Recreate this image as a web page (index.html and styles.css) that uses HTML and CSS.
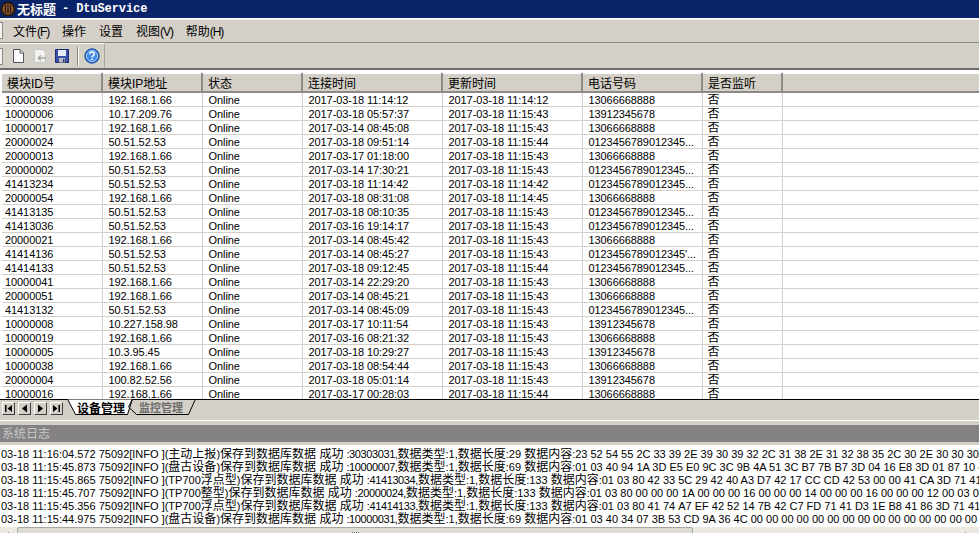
FILE: index.html
```html
<!DOCTYPE html>
<html lang="zh-CN">
<head>
<meta charset="utf-8">
<title>无标题 - DtuService</title>
<link rel="stylesheet" href="styles.css">
</head>
<body>
<div class="window">
  <header class="titlebar">
    <svg class="appicon" width="16" height="16" viewBox="0 0 16 16"><circle cx="8" cy="8" r="7.500" fill="#2a1a10"/><circle cx="8" cy="8" r="5.500" fill="#8a5a30"/><path d="M5.500 4v8M8 3.500v9M10.500 4v8" stroke="#2a1a10" stroke-width="1.200"/></svg>
    <span class="title-cjk">无标题</span><span class="title-app">- DtuService</span>
  </header>
  <nav class="menubar">
    <span class="grip"></span>
    <span class="menu">文件<span class="key">(F)</span></span><span class="menu">操作</span><span class="menu">设置</span><span class="menu">视图<span class="key">(V)</span></span><span class="menu">帮助<span class="key">(H)</span></span>
  </nav>
  <div class="toolbar">
    <div class="toolband">
      <span class="grip"></span>
      <svg class="tool" width="16" height="16" viewBox="0 0 16 16"><path d="M3.500 1.500h6.500l3.500 3.500v9.500H3.500z" fill="#fff" stroke="#555"/><path d="M10 1.500V5h3.500" fill="#dfe4ee" stroke="#555"/></svg>
      <svg class="tool" width="16" height="16" viewBox="0 0 16 16"><path d="M2.500 1.500h8l3 3v10h-11z" fill="#f2f2f0" stroke="#c8c8c4"/><path d="M6 10h8M6 10l3-2.500M6 10l3 2.500" fill="none" stroke="#a8a8a4" stroke-width="1.500"/></svg>
      <svg class="tool" width="16" height="16" viewBox="0 0 16 16"><path d="M1.500 1.500h13v13h-13z" fill="#3a4fa8" stroke="#1c2a70"/><path d="M4 2h8v6H4z" fill="#e8ecf4"/><path d="M5 10h6v4.500H5z" fill="#b8bcc8"/><path d="M9 11h1.500v3H9z" fill="#27336f"/></svg>
      <span class="sep"></span>
      <svg class="tool help" width="16" height="16" viewBox="0 0 16 16"><circle cx="8" cy="8" r="7.200" fill="#2a6fd0" stroke="#1a4ea0"/><circle cx="8" cy="8" r="5.500" fill="#3f8be6" stroke="#cfe2fa" stroke-width=".8"/><path d="M5.800 6.200c0-1.500 1-2.200 2.200-2.200s2.300.8 2.300 2c0 1.700-2.200 1.700-2.200 3.400" fill="none" stroke="#fff" stroke-width="1.500"/><path d="M7.300 10.600h1.500v1.500H7.300z" fill="#fff"/></svg>
    </div>
  </div>
  <main class="listpane">
    <table class="grid">
      <colgroup><col class="c1"><col class="c1"><col class="c1"><col class="c2"><col class="c2"><col class="c3"><col class="c4"><col></colgroup>
      <thead><tr><th>模块ID号</th><th>模块IP地址</th><th>状态</th><th>连接时间</th><th>更新时间</th><th>电话号码</th><th>是否监听</th><th></th></tr></thead>
      <tbody>
        <tr><td>10000039</td><td>192.168.1.66</td><td>Online</td><td>2017-03-18 11:14:12</td><td>2017-03-18 11:14:12</td><td>13066668888</td><td>否</td><td></td></tr>
        <tr><td>10000006</td><td>10.17.209.76</td><td>Online</td><td>2017-03-18 05:57:37</td><td>2017-03-18 11:15:43</td><td>13912345678</td><td>否</td><td></td></tr>
        <tr><td>10000017</td><td>192.168.1.66</td><td>Online</td><td>2017-03-14 08:45:08</td><td>2017-03-18 11:15:43</td><td>13066668888</td><td>否</td><td></td></tr>
        <tr><td>20000024</td><td>50.51.52.53</td><td>Online</td><td>2017-03-18 09:51:14</td><td>2017-03-18 11:15:44</td><td>0123456789012345...</td><td>否</td><td></td></tr>
        <tr><td>20000013</td><td>192.168.1.66</td><td>Online</td><td>2017-03-17 01:18:00</td><td>2017-03-18 11:15:43</td><td>13066668888</td><td>否</td><td></td></tr>
        <tr><td>20000002</td><td>50.51.52.53</td><td>Online</td><td>2017-03-14 17:30:21</td><td>2017-03-18 11:15:43</td><td>0123456789012345...</td><td>否</td><td></td></tr>
        <tr><td>41413234</td><td>50.51.52.53</td><td>Online</td><td>2017-03-18 11:14:42</td><td>2017-03-18 11:14:42</td><td>0123456789012345...</td><td>否</td><td></td></tr>
        <tr><td>20000054</td><td>192.168.1.66</td><td>Online</td><td>2017-03-18 08:31:08</td><td>2017-03-18 11:14:45</td><td>13066668888</td><td>否</td><td></td></tr>
        <tr><td>41413135</td><td>50.51.52.53</td><td>Online</td><td>2017-03-18 08:10:35</td><td>2017-03-18 11:15:43</td><td>0123456789012345...</td><td>否</td><td></td></tr>
        <tr><td>41413036</td><td>50.51.52.53</td><td>Online</td><td>2017-03-16 19:14:17</td><td>2017-03-18 11:15:43</td><td>0123456789012345...</td><td>否</td><td></td></tr>
        <tr><td>20000021</td><td>192.168.1.66</td><td>Online</td><td>2017-03-14 08:45:42</td><td>2017-03-18 11:15:43</td><td>13066668888</td><td>否</td><td></td></tr>
        <tr><td>41414136</td><td>50.51.52.53</td><td>Online</td><td>2017-03-14 08:45:27</td><td>2017-03-18 11:15:43</td><td>0123456789012345'...</td><td>否</td><td></td></tr>
        <tr><td>41414133</td><td>50.51.52.53</td><td>Online</td><td>2017-03-18 09:12:45</td><td>2017-03-18 11:15:44</td><td>0123456789012345...</td><td>否</td><td></td></tr>
        <tr><td>10000041</td><td>192.168.1.66</td><td>Online</td><td>2017-03-14 22:29:20</td><td>2017-03-18 11:15:43</td><td>13066668888</td><td>否</td><td></td></tr>
        <tr><td>20000051</td><td>192.168.1.66</td><td>Online</td><td>2017-03-14 08:45:21</td><td>2017-03-18 11:15:43</td><td>13066668888</td><td>否</td><td></td></tr>
        <tr><td>41413132</td><td>50.51.52.53</td><td>Online</td><td>2017-03-14 08:45:09</td><td>2017-03-18 11:15:43</td><td>0123456789012345...</td><td>否</td><td></td></tr>
        <tr><td>10000008</td><td>10.227.158.98</td><td>Online</td><td>2017-03-17 10:11:54</td><td>2017-03-18 11:15:43</td><td>13912345678</td><td>否</td><td></td></tr>
        <tr><td>10000019</td><td>192.168.1.66</td><td>Online</td><td>2017-03-16 08:21:32</td><td>2017-03-18 11:15:43</td><td>13066668888</td><td>否</td><td></td></tr>
        <tr><td>10000005</td><td>10.3.95.45</td><td>Online</td><td>2017-03-18 10:29:27</td><td>2017-03-18 11:15:43</td><td>13912345678</td><td>否</td><td></td></tr>
        <tr><td>10000038</td><td>192.168.1.66</td><td>Online</td><td>2017-03-18 08:54:44</td><td>2017-03-18 11:15:43</td><td>13066668888</td><td>否</td><td></td></tr>
        <tr><td>20000004</td><td>100.82.52.56</td><td>Online</td><td>2017-03-18 05:01:14</td><td>2017-03-18 11:15:43</td><td>13912345678</td><td>否</td><td></td></tr>
        <tr><td>10000016</td><td>192.168.1.66</td><td>Online</td><td>2017-03-17 00:28:03</td><td>2017-03-18 11:15:44</td><td>13066668888</td><td>否</td><td></td></tr>
      </tbody>
    </table>
  </main>
  <div class="tabbar">
    <div class="navbtns">
      <button class="nav"><svg width="9" height="9" viewBox="0 0 9 9"><path d="M1 1h1.500v7H1zM8 1v7L3.500 4.500z"/></svg></button>
      <button class="nav"><svg width="9" height="9" viewBox="0 0 9 9"><path d="M7 0.500v8L2 4.500z"/></svg></button>
      <button class="nav"><svg width="9" height="9" viewBox="0 0 9 9"><path d="M2 0.500v8l5-4z"/></svg></button>
      <button class="nav"><svg width="9" height="9" viewBox="0 0 9 9"><path d="M8 1H6.500v7H8zM1 1v7l4.500-3.500z"/></svg></button>
    </div>
    <div class="tabs">
      <svg class="tabshape" width="200" height="17" viewBox="0 0 200 17"><path d="M67.500 0 75.500 15.500H127.500L132.500 0z" fill="#fff" stroke="#000"/><path d="M132.500 0 128.500 8 136.500 15.500H188.500L195.500 0" fill="none" stroke="#000"/></svg>
      <span class="tab active">设备管理</span><span class="tab">监控管理</span>
    </div>
  </div>
  <div class="splitter"></div>
  <section class="logpane">
    <h2 class="logtitle">系统日志</h2>
    <div class="logframe">
      <div class="log">
        <div>03-18 11:16:04.572 75092[INFO ](<span class="zh">主动上报</span>)<span class="zh">保存到数据库数据 成功</span> <span class="id">:30303031,</span><span class="zh">数据类型</span>:1,<span class="zh">数据长度</span>:29 <span class="zh">数据内容</span>:23 52 54 55 2C 33 39 2E 39 30 39 32 2C 31 38 2E 31 32 38 35 2C 30 2E 30 30 30 30</div>
        <div>03-18 11:15:45.873 75092[INFO ](<span class="zh">盘古设备</span>)<span class="zh">保存到数据库数据 成功</span> <span class="id">:10000007,</span><span class="zh">数据类型</span>:1,<span class="zh">数据长度</span>:69 <span class="zh">数据内容</span>:01 03 40 94 1A 3D E5 E0 9C 3C 9B 4A 51 3C B7 7B B7 3D 04 16 E8 3D 01 87 10 43</div>
        <div>03-18 11:15:45.865 75092[INFO ](TP700<span class="zh">浮点型</span>)<span class="zh">保存到数据库数据 成功</span> <span class="id">:41413034,</span><span class="zh">数据类型</span>:1,<span class="zh">数据长度</span>:133 <span class="zh">数据内容</span>:01 03 80 42 33 5C 29 42 40 A3 D7 42 17 CC CD 42 53 00 00 41 CA 3D 71 41 E7</div>
        <div>03-18 11:15:45.707 75092[INFO ](TP700<span class="zh">整型</span>)<span class="zh">保存到数据库数据 成功</span> <span class="id">:20000024,</span><span class="zh">数据类型</span>:1,<span class="zh">数据长度</span>:133 <span class="zh">数据内容</span>:01 03 80 00 00 00 1A 00 00 00 16 00 00 00 14 00 00 00 16 00 00 00 12 00 03 0D</div>
        <div>03-18 11:15:45.356 75092[INFO ](TP700<span class="zh">浮点型</span>)<span class="zh">保存到数据库数据 成功</span> <span class="id">:41414133,</span><span class="zh">数据类型</span>:1,<span class="zh">数据长度</span>:133 <span class="zh">数据内容</span>:01 03 80 41 74 A7 EF 42 52 14 7B 42 C7 FD 71 41 D3 1E B8 41 86 3D 71 41 87</div>
        <div>03-18 11:15:44.975 75092[INFO ](<span class="zh">盘古设备</span>)<span class="zh">保存到数据库数据 成功</span> <span class="id">:10000031,</span><span class="zh">数据类型</span>:1,<span class="zh">数据长度</span>:69 <span class="zh">数据内容</span>:01 03 40 34 07 3B 53 CD 9A 36 4C 00 00 00 00 00 00 00 00 00 00 00 00 00 00 00 43 2</div>
      </div>
      <div class="hscroll">
        <span class="arrow left"></span>
        <div class="thumb"><span class="ridges"></span></div>
        <span class="arrow right"></span>
      </div>
    </div>
  </section>
</div>
</body>
</html>
```
FILE: styles.css
```css
* { box-sizing: border-box; }
html, body { margin: 0; padding: 0; height: 100%; overflow: hidden; }
body { font-family: "Liberation Sans", "Noto Sans CJK SC", sans-serif; font-size: 11px; color: #000; background: #d4d0c8; }
.window { width: 979px; height: 533px; display: flex; flex-direction: column; overflow: hidden; }

.titlebar { height: 19px; flex: none; display: flex; align-items: center; padding-left: 0; background: #0a246a; color: #fff; border-bottom: 1px solid #fff; }
.appicon { flex: none; margin-right: 1px; }
.title-cjk { font: bold 13px/18px "Noto Sans CJK SC", sans-serif; }
.title-app { font: bold 12px/18px "Liberation Mono", monospace; margin-left: 6px; white-space: pre; letter-spacing: -.1px; }

.menubar { height: 24px; flex: none; display: flex; align-items: center; border-bottom: 1px solid #8c8a86; box-shadow: inset 0 1px 0 #f4f2ee; }
.grip { width: 3px; height: 17px; flex: none; border: 1px solid #8c8a86; border-left: 0; background: #f4f2ee; }
.menu { font-size: 12px; margin-left: 13px; white-space: nowrap; }
.grip + .menu { margin-left: 10px; }
.key { letter-spacing: -1.100px; }

.toolbar { height: 27px; flex: none; display: flex; border-bottom: 2px solid #6e6c68; }
.toolband { width: 105px; display: flex; align-items: center; border-right: 1px solid #a8a6a2; border-top: 1px solid #fff; }
.tool { flex: none; margin-left: 6px; }
.toolband .tool:first-of-type { margin-left: 7px; }
.sep { width: 2px; height: 19px; margin-left: 7px; flex: none; border-left: 1px solid #8c8a86; border-right: 1px solid #fff; }
.toolband .help { margin-left: 5px; }

.listpane { height: 329px; flex: none; overflow: hidden; padding: 2px 0 0 2px; border-top: 1px solid #fff; background: #fff; }
.grid { table-layout: fixed; width: 977px; border-collapse: collapse; color: #000; }
.c1 { width: 100px; }
.c2 { width: 140px; }
.c3 { width: 120px; }
.c4 { width: 80px; }
.grid th { height: 17px; padding: 0 0 0 5px; font-weight: normal; font-size: 12px; text-align: left; background: #d4d0c8; border-right: 2px solid #8c8a86; border-bottom: 2px solid #8c8a86; border-top: 1px solid #fff; white-space: nowrap; overflow: hidden; }
.grid th:last-child { border-right: 0; }
.grid td { height: 14px; padding: 1px 0 0 3px; line-height: 12px; letter-spacing: -.08px; border-right: 1px solid #d4d0c8; border-bottom: 1px solid #d4d0c8; white-space: nowrap; overflow: hidden; }
.grid td:nth-child(n+2) { padding-left: 6px; }
.grid td:nth-child(7) { font-size: 12px; padding-left: 5px; }
.grid td:last-child { border-right: 0; }

.tabbar { height: 21px; flex: none; display: flex; border-top: 1px solid #000; }
.navbtns { display: flex; gap: 3px; padding: 2px 0 0 2px; }
.nav { width: 13px; height: 13px; padding: 0; display: flex; align-items: center; justify-content: center; background: #d4d0c8; border: 1px solid; border-color: #fff #404040 #404040 #fff; }
.tabs { position: relative; display: flex; margin-left: 14px; height: 16px; }
.tabshape { position: absolute; left: -77px; top: -1px; }
.tab { position: relative; font: bold 11px/15px "Noto Sans CJK SC", sans-serif; color: #6b6b6b; white-space: nowrap; }
.tab.active { font-size: 12px; color: #000; margin-right: 14px; }

.splitter { height: 5px; flex: none; background: #d4d0c8; border-top: 1px solid #fff; }
.logpane { flex: 1; min-height: 0; display: flex; flex-direction: column; }
.logtitle { margin: 0; height: 17px; flex: none; font-size: 12px; font-weight: normal; line-height: 19px; padding-left: 2px; color: #c8c8c8; background: #848284; }
.logframe { flex: 1; min-height: 0; display: flex; flex-direction: column; background: #fff; border-top: 3px solid #d4d0c8; padding-top: 3px; }
.log { height: 79px; flex: none; overflow: hidden; padding-left: 1px; white-space: nowrap; line-height: 13px; font-size: 11px; }
.zh { font-size: 12px; line-height: 13px; }
.id { letter-spacing: -.4px; }
.hscroll { height: 17px; flex: none; display: flex; align-items: center; padding-left: 1px; background: #ece9e2; }
.arrow { width: 0; height: 0; flex: none; border-style: solid; border-color: transparent; border-width: 4px; }
.arrow.left { border-right-color: #404040; }
.arrow.right { border-left-color: #404040; margin-left: 272px; }
.thumb { width: 676px; height: 17px; margin-left: 8px; display: flex; align-items: center; justify-content: center; background: #dedbd4; border: 1px solid #a8a6a2; border-radius: 2px; }
.ridges { width: 7px; height: 7px; background: repeating-linear-gradient(90deg, #707070 0 1px, #dedbd4 1px 2px); }
```
